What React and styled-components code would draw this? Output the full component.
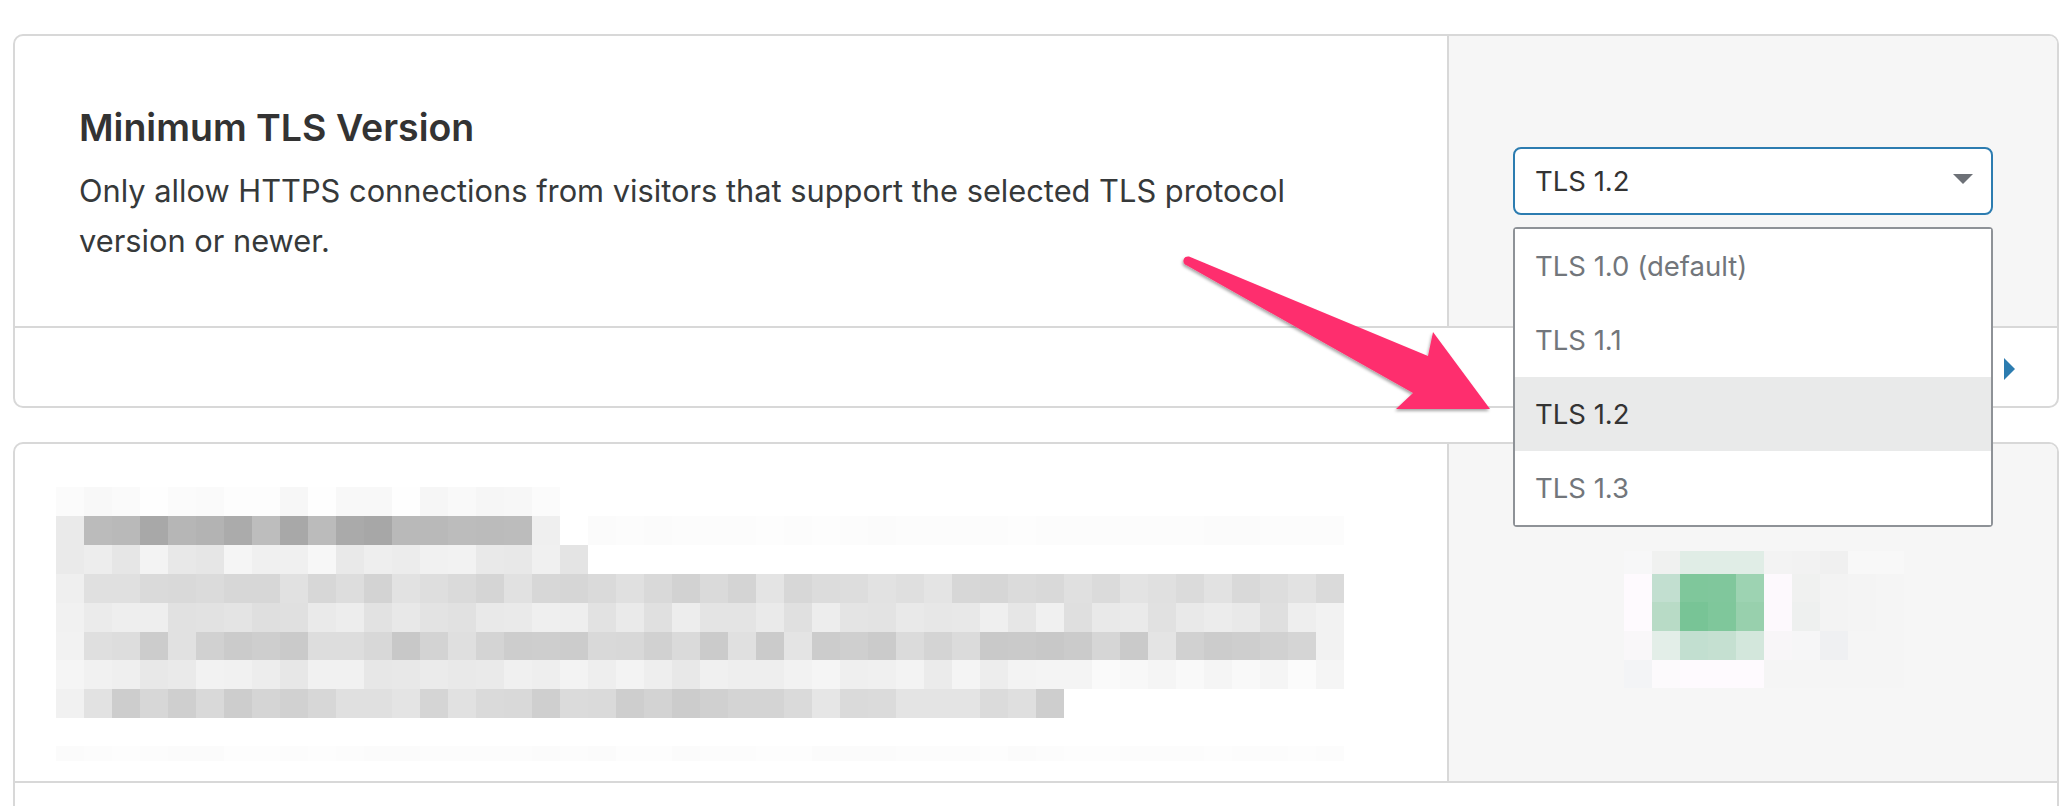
import React from "react";
import styled, { createGlobalStyle } from "styled-components";

const GlobalStyle = createGlobalStyle`
  html, body { margin: 0; padding: 0; background: #ffffff; }
  body { font-family: Inter, "Noto Sans", "Liberation Sans", sans-serif; color: #333333; }
  * { box-sizing: border-box; }
`;

const Page = styled.div`
  position: relative;
  height: 806px;
  overflow: hidden;
  padding: 34px 13px 0;
  display: flex;
  flex-direction: column;
  gap: 34px;
`;

const Card = styled.section`
  flex-shrink: 0;
  border: 2px solid #d8d8d8;
  border-radius: 10px;
  background: #ffffff;
  display: flex;
  flex-direction: column;
`;

const MainRow = styled.div`
  display: grid;
  grid-template-columns: minmax(0, 1fr) 610px;
  height: ${(p) => p.$h}px;
`;

const Info = styled.div`
  display: flex;
  flex-direction: column;
  justify-content: center;
  padding: 8px 64px 0;
`;

const BlurInfo = styled.div`
  padding: 14px 0 0 41px;
  overflow: hidden;
`;

const Title = styled.h3`
  margin: 0 0 15px;
  font-size: 37.5px;
  line-height: 46px;
  font-weight: 600;
  color: #333333;
`;

const Desc = styled.p`
  margin: 0;
  max-width: 1240px;
  font-size: 30.8px;
  line-height: 50px;
  color: #36393a;
`;

const Control = styled.div`
  background: #f6f6f6;
  border-left: 2px solid #d8d8d8;
  border-top-right-radius: 8px;
  display: flex;
  align-items: ${(p) => (p.$top ? "flex-start" : "center")};
  padding: ${(p) => (p.$top ? "107px 0 0 175px" : "0 64px")};
`;

const SelectWrap = styled.div`
  position: relative;
  width: 480px;
`;

const SelectBox = styled.div`
  height: 68px;
  border: 2px solid #2c7cb0;
  border-radius: 8px;
  background: #ffffff;
  display: flex;
  align-items: center;
  justify-content: space-between;
  padding: 0 18px 0 20px;
  font-size: 27.5px;
  color: #333333;
`;

const Caret = styled.span`
  width: 0;
  height: 0;
  border-left: 10px solid transparent;
  border-right: 10px solid transparent;
  border-top: 10px solid #6d7177;
  margin-top: -4px;
`;

const Menu = styled.ul`
  position: absolute;
  z-index: 4;
  top: calc(100% + 12px);
  left: 0;
  width: 100%;
  margin: 0;
  padding: 0;
  list-style: none;
  background: #ffffff;
  border: 2px solid #8e9297;
  border-radius: 4px;
`;

const Option = styled.li`
  height: 74px;
  display: flex;
  align-items: center;
  padding-left: 20px;
  font-size: 27.5px;
  color: ${(p) => (p.$active ? "#333333" : "#72767b")};
  background: ${(p) => (p.$active ? "#e9eaea" : "#ffffff")};
`;

const Footer = styled.div`
  height: 80px;
  border-top: 2px solid #d8d8d8;
  display: flex;
  align-items: center;
  justify-content: flex-end;
  padding-right: 42px;
`;

const Expand = styled.span`
  width: 0;
  height: 0;
  border-top: 11px solid transparent;
  border-bottom: 11px solid transparent;
  border-left: 11px solid #2c7cb0;
  margin-top: 4px;
`;

const Overlay = styled.svg`
  position: absolute;
  left: 0;
  top: 0;
  z-index: 6;
  pointer-events: none;
`;

function rng(seed) {
  let s = seed;
  return () => {
    s = (s * 1103515245 + 12345) & 0x7fffffff;
    return s / 0x7fffffff;
  };
}

const ROWS = [
  { y: 29, h: 29, segs: [[0, 18, 246, 254]] },
  { y: 58, h: 29, segs: [[0, 1, 232, 234], [1, 17, 166, 192], [17, 18, 236, 240], [19, 46, 251, 253]] },
  { y: 87, h: 29, segs: [[0, 19, 228, 248]] },
  { y: 116, h: 29, segs: [[0, 1, 238, 242], [1, 46, 210, 228]] },
  { y: 145, h: 29, segs: [[0, 1, 240, 244], [1, 45, 222, 240], [45, 46, 241, 244]] },
  { y: 174, h: 28, segs: [[0, 1, 240, 244], [1, 45, 200, 228], [45, 46, 240, 244]] },
  { y: 202, h: 29, segs: [[0, 37, 230, 245], [37, 46, 245, 251]] },
  { y: 231, h: 29, segs: [[0, 1, 238, 242], [1, 36, 204, 230]] },
  { y: 288, h: 15, segs: [[0, 46, 251, 253]] },
];

function Mosaic() {
  const r = rng(7);
  const cells = [];
  ROWS.forEach((row, ri) => {
    row.segs.forEach(([a, b, lo, hi]) => {
      for (let c = a; c < b; c++) {
        const v = Math.round(lo + r() * (hi - lo));
        cells.push(
          <rect key={`${ri}-${c}`} x={c * 28} y={row.y} width={28} height={row.h} fill={`rgb(${v},${v},${v})`} />
        );
      }
    });
  });
  return (
    <svg width="1372" height="310" viewBox="0 0 1372 310">
      {cells}
    </svg>
  );
}

const TOGGLE = [
  { h: 23, c: ["#f7f7f8", "#f0f1f0", "#e0ede6", "#e0ede6", "#e0ede6", "#f3f3f3", "#f2f2f2", "#f0f0f0", "#f8f8f8", "#f8f8f8"] },
  { h: 28, c: ["#fefafe", "#c2dfd0", "#7fc79b", "#80c79c", "#9dd3b2", "#fdf9fd", "#f0f1f0", "#f3f3f3", "#f4f4f4", "#f5f5f5"] },
  { h: 29, c: ["#fefafe", "#b8dbc6", "#78c496", "#7fc79b", "#98d0ad", "#fdf9fd", "#eef0ef", "#f3f3f3", "#f4f4f4", "#f5f5f5"] },
  { h: 29, c: ["#f9f7f9", "#e3eee8", "#c2dfd0", "#c5e0d1", "#d3e7dc", "#f8f6f8", "#f6f6f7", "#eff0f2", "#f5f5f5", "#f5f5f5"] },
  { h: 28, c: ["#f3f4f6", "#fcfafc", "#fefafe", "#fefafe", "#fefafe", "#f5f5f5", "#f5f5f5", "#f5f5f5", "#f5f5f5", "#f5f5f5"] },
];

function ToggleMosaic() {
  let y = 0;
  const out = [];
  TOGGLE.forEach((row, ri) => {
    row.c.forEach((col, ci) => {
      out.push(<rect key={`${ri}-${ci}`} x={ci * 28} y={y} width={28} height={row.h} fill={col} />);
    });
    y += row.h;
  });
  return (
    <svg width="280" height="140" viewBox="0 0 280 140">
      {out}
    </svg>
  );
}

function Arrow() {
  return (
    <Overlay width="2072" height="806" viewBox="0 0 2072 806">
      <defs>
        <filter id="shadow" x="-10%" y="-10%" width="120%" height="130%">
          <feDropShadow dx="-1" dy="2" stdDeviation="1.5" floodColor="#000" floodOpacity="0.35" />
        </filter>
      </defs>
      <g fill="#fe2f6e" filter="url(#shadow)">
        <path d="M1189 256.5 L1428 356 L1433 332 L1490 409 L1396 409 L1413 393 L1187 265.5 A4.6 4.6 0 0 1 1189 256.5 Z" />
      </g>
    </Overlay>
  );
}

const OPTIONS = ["TLS 1.0 (default)", "TLS 1.1", "TLS 1.2", "TLS 1.3"];

export default function App() {
  return (
    <>
      <GlobalStyle />
      <Page>
        <Card>
          <MainRow $h={290}>
            <Info>
              <Title>Minimum TLS Version</Title>
              <Desc>
                Only allow HTTPS connections from visitors that support the selected TLS protocol version or newer.
              </Desc>
            </Info>
            <Control>
              <SelectWrap>
                <SelectBox>
                  <span>TLS 1.2</span>
                  <Caret />
                </SelectBox>
                <Menu>
                  {OPTIONS.map((o) => (
                    <Option key={o} $active={o === "TLS 1.2"}>
                      {o}
                    </Option>
                  ))}
                </Menu>
              </SelectWrap>
            </Control>
          </MainRow>
          <Footer>
            <Expand />
          </Footer>
        </Card>
        <Card>
          <MainRow $h={337}>
            <BlurInfo>
              <Mosaic />
            </BlurInfo>
            <Control $top>
              <ToggleMosaic />
            </Control>
          </MainRow>
          <Footer />
        </Card>
        <Arrow />
      </Page>
    </>
  );
}
